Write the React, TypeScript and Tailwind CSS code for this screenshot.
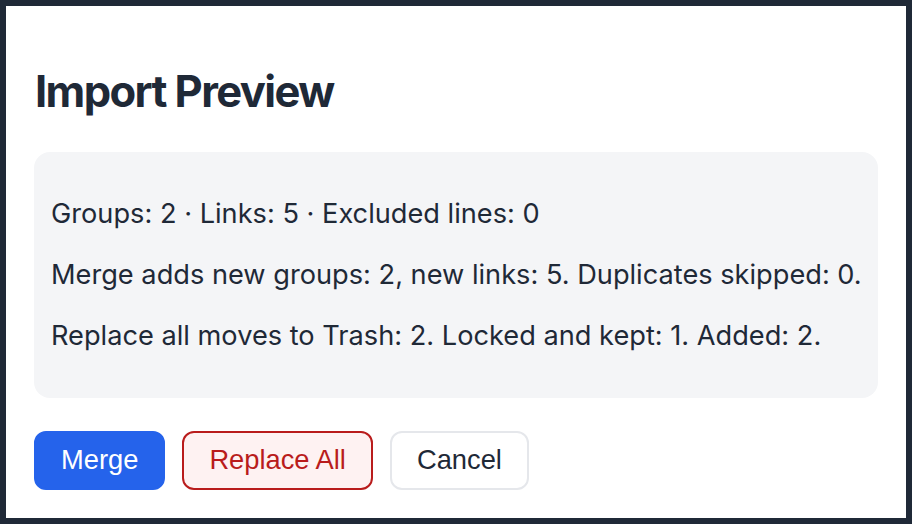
import React from "react";

export default function App() {
  return (
    <div
      className="w-[912px] h-[524px] border-[6px] border-[#1f2937] bg-white text-[#1f2937] overflow-hidden"
      style={{ fontFamily: "Inter, 'Noto Sans', sans-serif" }}
    >
      <div className="flex flex-col gap-[33px] pt-[57px] px-[28px] pb-[28px]">
        <h2 className="text-[43.5px] leading-[56px] font-bold tracking-[-1.6px] pl-[1px]">Import Preview</h2>
        <div className="rounded-[16px] bg-[#f4f5f7] px-[17px] py-[42px] flex flex-col gap-[21px] text-[27.2px] leading-[40px] whitespace-nowrap">
          <p>Groups: 2 · Links: 5 · Excluded lines: 0</p>
          <p>Merge adds new groups: 2, new links: 5. Duplicates skipped: 0.</p>
          <p>Replace all moves to Trash: 2. Locked and kept: 1. Added: 2.</p>
        </div>
        <div
          className="flex gap-[17px] text-[27.3px]"
          style={{ fontFamily: "'Liberation Sans', Arial, sans-serif" }}
        >
          <button className="h-[59px] px-[25px] rounded-[12px] border-2 border-[#2563eb] bg-[#2563eb] text-white">
            Merge
          </button>
          <button className="h-[59px] px-[25px] rounded-[12px] border-2 border-[#b91c1c] bg-[#fef2f2] text-[#b91c1c]">
            Replace All
          </button>
          <button className="h-[59px] px-[25px] rounded-[12px] border-2 border-[#e5e7eb] bg-white text-[#1f2937]">
            Cancel
          </button>
        </div>
      </div>
    </div>
  );
}
